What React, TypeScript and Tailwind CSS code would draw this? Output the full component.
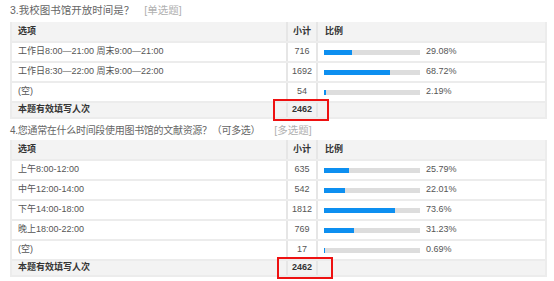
import React from "react";

type Row = { label: string; count: number; pct: number; pctText: string };

const q3: Row[] = [
  { label: "工作日8:00—21:00 周末9:00—21:00", count: 716, pct: 29.08, pctText: "29.08%" },
  { label: "工作日8:30—22:00 周末9:00—22:00", count: 1692, pct: 68.72, pctText: "68.72%" },
  { label: "(空)", count: 54, pct: 2.19, pctText: "2.19%" },
];

const q4: Row[] = [
  { label: "上午8:00-12:00", count: 635, pct: 25.79, pctText: "25.79%" },
  { label: "中午12:00-14:00", count: 542, pct: 22.01, pctText: "22.01%" },
  { label: "下午14:00-18:00", count: 1812, pct: 73.6, pctText: "73.6%" },
  { label: "晚上18:00-22:00", count: 769, pct: 31.23, pctText: "31.23%" },
  { label: "(空)", count: 17, pct: 0.69, pctText: "0.69%" },
];

function Table({ rows, boxLeft }: { rows: Row[]; boxLeft: string }) {
  return (
    <div className="relative w-[537px] border-x-2 border-[#ececec] text-[9px] text-[#555]">
      <div className="flex h-[19px] bg-[#f3f3f3] font-bold text-[#333]">
        <div className="flex w-[274px] items-center pl-[6px]">选项</div>
        <div className="flex w-[32px] items-center justify-center border-x-2 border-[#e6e6e6]">小计</div>
        <div className="flex flex-1 items-center pl-[7px]">比例</div>
      </div>
      {rows.map((r) => (
        <div key={r.label} className="flex h-[20px] border-t-2 border-[#ececec] bg-white">
          <div className="flex w-[274px] items-center pl-[6px]">{r.label}</div>
          <div className="flex w-[32px] items-center justify-center border-x-2 border-[#e6e6e6]">{r.count}</div>
          <div className="flex flex-1 items-center pl-[6px]">
            <div className="h-[5px] w-[96px] bg-[#dddddd]">
              <div className="h-full bg-[#0d8ff0]" style={{ width: `${Math.max(r.pct, 1.5)}%` }} />
            </div>
            <span className="ml-[6px]">{r.pctText}</span>
          </div>
        </div>
      ))}
      <div className="flex h-[18px] border-y-2 border-[#ececec] bg-[#f3f3f3] font-bold text-[#333]">
        <div className="flex w-[274px] items-center pl-[6px]">本题有效填写人次</div>
        <div className="flex w-[32px] items-center justify-center border-x-2 border-[#e6e6e6]">2462</div>
        <div className="flex-1" />
      </div>
      <div className={`absolute bottom-[-2px] h-[22px] w-[56px] border-2 border-[#ee1111] ${boxLeft}`} />
    </div>
  );
}

export default function App() {
  return (
    <div
      className="h-[281px] w-[554px] overflow-hidden bg-white pl-[10px]"
      style={{ fontFamily: '"Liberation Sans", "Noto Sans CJK SC", sans-serif' }}
    >
      <div className="flex h-[22px] items-center pb-[1px] text-[10.5px] text-[#666]">
        <span>3.我校图书馆开放时间是？</span>
        <span className="ml-[10px] text-[#b0b0b0]">[单选题]</span>
      </div>
      <Table rows={q3} boxLeft="left-[261px]" />
      <div className="flex h-[21px] items-center pt-[2px] text-[10px] text-[#666]">
        <span className="tracking-[-0.3px]">4.您通常在什么时间段使用图书馆的文献资源？（可多选）</span>
        <span className="ml-[14px] text-[10.5px] text-[#b0b0b0]">[多选题]</span>
      </div>
      <Table rows={q4} boxLeft="left-[265px]" />
    </div>
  );
}
